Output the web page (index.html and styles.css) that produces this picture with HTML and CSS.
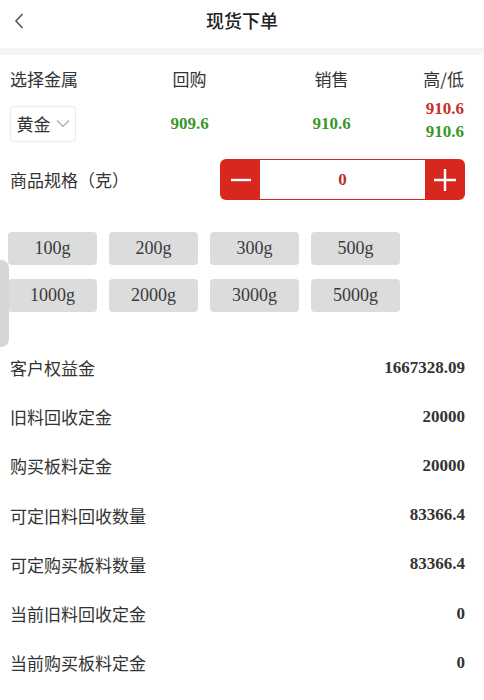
FILE: index.html
```html
<!DOCTYPE html>
<html lang="zh">
<head>
<meta charset="utf-8">
<link rel="stylesheet" href="styles.css">
</head>
<body>
<div class="page">
  <header class="nav">
    <svg class="back" width="12" height="18" viewBox="0 0 12 18"><path d="M9.5 2 L3 9 L9.5 16" fill="none" stroke="#555" stroke-width="1.6"/></svg>
    <h1 class="title">现货下单</h1>
  </header>
  <div class="sep"></div>

  <section class="quote">
    <div class="qhead">
      <span class="c1">选择金属</span>
      <span class="c2">回购</span>
      <span class="c3">销售</span>
      <span class="c4">高/低</span>
    </div>
    <div class="qrow">
      <div class="c1"><div class="select">黄金<svg width="14" height="9" viewBox="0 0 14 9"><path d="M1 1.5 L7 7.5 L13 1.5" fill="none" stroke="#aaa" stroke-width="1.2"/></svg></div></div>
      <span class="c2 num green">909.6</span>
      <span class="c3 num green">910.6</span>
      <div class="c4 hl"><span class="num red">910.6</span><span class="num green">910.6</span></div>
    </div>
  </section>

  <section class="spec">
    <span class="label">商品规格（克）</span>
    <div class="stepper">
      <span class="sbtn"><svg width="20" height="20" viewBox="0 0 20 20"><path d="M0 10 H20" stroke="#fff" stroke-width="2.4"/></svg></span>
      <span class="sval">0</span>
      <span class="sbtn"><svg width="22" height="22" viewBox="0 0 22 22"><path d="M0 11 H22 M11 0 V22" stroke="#fff" stroke-width="2.4"/></svg></span>
    </div>
  </section>

  <section class="chips">
    <span class="chip">100g</span>
    <span class="chip">200g</span>
    <span class="chip">300g</span>
    <span class="chip">500g</span>
    <span class="chip">1000g</span>
    <span class="chip">2000g</span>
    <span class="chip">3000g</span>
    <span class="chip">5000g</span>
  </section>

  <section class="list">
    <div class="row"><span>客户权益金</span><span class="num">1667328.09</span></div>
    <div class="row"><span>旧料回收定金</span><span class="num">20000</span></div>
    <div class="row"><span>购买板料定金</span><span class="num">20000</span></div>
    <div class="row"><span>可定旧料回收数量</span><span class="num">83366.4</span></div>
    <div class="row"><span>可定购买板料数量</span><span class="num">83366.4</span></div>
    <div class="row"><span>当前旧料回收定金</span><span class="num">0</span></div>
    <div class="row"><span>当前购买板料定金</span><span class="num">0</span></div>
  </section>

  <div class="tab"></div>
</div>
</body>
</html>
```

FILE: styles.css
```css
html, body {
  margin: 0;
  padding: 0;
  background: #fff;
}
body {
  font-family: "Noto Sans CJK SC", "Noto Sans", sans-serif;
  color: #333;
  width: 484px;
  height: 700px;
  overflow: hidden;
}
.page {
  position: relative;
  height: 700px;
}
.nav {
  height: 48px;
  display: flex;
  align-items: center;
  justify-content: center;
  position: relative;
}
.back {
  position: absolute;
  left: 13px;
  top: 12px;
}
.title {
  margin: 0;
  font-size: 18px;
  font-weight: 500;
  color: #222;
  margin-top: -8px;
}
.sep {
  height: 7px;
  background: #f5f5f5;
}
.quote {
  padding: 0 20px 0 10px;
}
.qhead, .qrow {
  display: grid;
  grid-template-columns: 120px 1fr 1fr 80px;
  align-items: center;
}
.qhead {
  height: 38px;
  font-size: 17px;
  margin-top: 4px;
}
.qhead .c2 { text-align: center; margin-left: -8px; }
.qhead .c3 { text-align: center; margin-left: 22px; }
.qhead .c4, .qrow .c4 { text-align: right; }
.qrow {
  height: 46px;
}
.qrow .c2 { text-align: center; margin-left: -8px; }
.qrow .c3 { text-align: center; margin-left: 22px; }
.select {
  width: 66px;
  height: 36px;
  box-sizing: border-box;
  border: 1px solid #ebebeb;
  border-radius: 4px;
  display: flex;
  align-items: center;
  justify-content: center;
  gap: 5px;
  font-size: 17px;
  color: #333;
  box-shadow: 0 0 2px rgba(0,0,0,0.04);
}
.num {
  font-family: "Liberation Serif", serif;
  font-weight: bold;
  font-size: 17px;
  color: #333;
}
.green { color: #3a962e; }
.red { color: #c4302a; }
.hl {
  display: flex;
  flex-direction: column;
  align-items: flex-end;
  line-height: 23px;
  margin-bottom: 7px;
}
.spec {
  display: flex;
  align-items: center;
  justify-content: space-between;
  padding: 0 19px 0 10px;
  margin-top: 16px;
  height: 41px;
}
.label {
  font-size: 17px;
}
.stepper {
  width: 245px;
  height: 41px;
  box-sizing: border-box;
  border-radius: 6px;
  background: #d8271f;
  display: flex;
  padding: 1px;
}
.sbtn {
  width: 39px;
  display: flex;
  align-items: center;
  justify-content: center;
}
.sval {
  flex: 1;
  background: #fff;
  display: flex;
  align-items: center;
  justify-content: center;
  font-family: "Liberation Serif", serif;
  font-weight: bold;
  font-size: 17px;
  color: #b8302a;
}
.chips {
  display: grid;
  grid-template-columns: repeat(4, 89px);
  column-gap: 12px;
  row-gap: 14px;
  padding: 0 0 0 8px;
  margin-top: 32px;
}
.chip {
  height: 33px;
  background: #dcdcdc;
  border-radius: 4px;
  display: flex;
  align-items: center;
  justify-content: center;
  font-family: "Liberation Serif", serif;
  font-size: 18px;
  color: #3a3a3a;
}
.list {
  margin-top: 31px;
  padding: 0 19px 0 10px;
}
.row {
  height: 49.2px;
  display: flex;
  align-items: center;
  justify-content: space-between;
  font-size: 17px;
}
.tab {
  position: absolute;
  left: 0;
  top: 260px;
  width: 9px;
  height: 87px;
  background: #d6d6d6;
  border-radius: 0 8px 8px 0;
}
```
